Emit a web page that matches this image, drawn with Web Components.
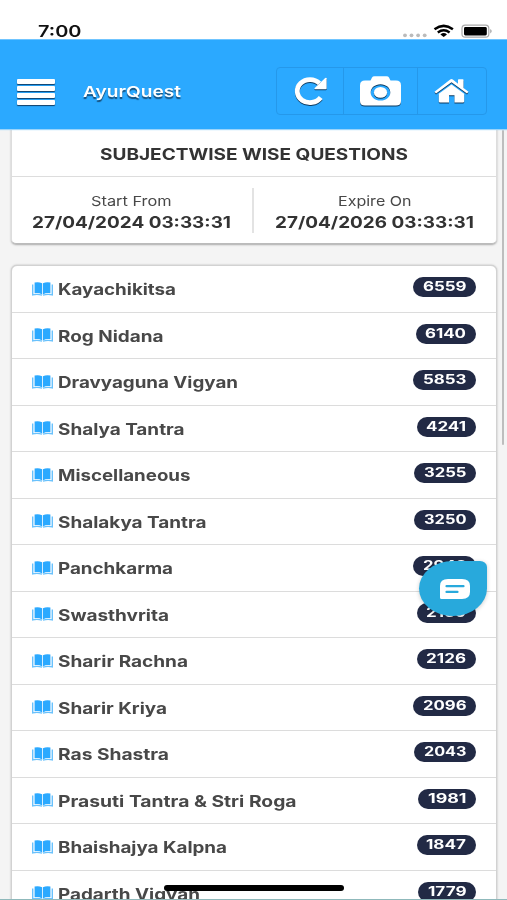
<!DOCTYPE html>
<html lang="en">
<head>
<meta charset="utf-8">
<title>AyurQuest</title>
<style>
html, body { margin: 0; height: 900px; overflow: hidden; background: #f4f4f4; }
body { font-family: Inter, "Liberation Sans", sans-serif; color: #333; }
</style>
</head>
<body>
<quest-app></quest-app>
<script>
/* Text stretched horizontally to the width given by its "w" attribute. */
class WideText extends HTMLElement {
  connectedCallback() {
    this.attachShadow({ mode: 'open' }).innerHTML = `<style>
      :host { display: block; white-space: nowrap; line-height: 1.25; }
      span { display: inline-block; transform-origin: 0 50%; }
    </style><span></span>`;
    const s = this.shadowRoot.querySelector('span');
    s.textContent = this.getAttribute('text');
    const w = parseFloat(this.getAttribute('w'));
    this.style.width = w + 'px';
    s.style.transform = `scaleX(${w / s.getBoundingClientRect().width})`;
  }
}
customElements.define('wide-text', WideText);

function define(name, html) {
  const t = document.createElement('template');
  t.innerHTML = html;
  customElements.define(name, class extends HTMLElement {
    connectedCallback() {
      this.attachShadow({ mode: 'open' }).appendChild(t.content.cloneNode(true));
    }
  });
}

define('status-bar', `<style>
  :host { display: flex; height: 39px; box-sizing: border-box; padding: 21px 14px 0 37.500px; background: #fff; justify-content: space-between; color: #111; }
  wide-text { font-size: 16px; font-weight: 600; }
  svg { display: block; }
</style>
<wide-text text="7:00" w="43.500"></wide-text>
<svg width="92" height="18" viewBox="400 21 92 18">
  <g fill="#bbb"><circle cx="404" cy="35.3" r="1.900"/><circle cx="410.500" cy="35.3" r="1.900"/><circle cx="417.100" cy="35.3" r="1.900"/><circle cx="423.700" cy="35.300" r="1.900"/></g>
  <g fill="none" stroke="#000" stroke-width="2.500"><path d="M433.500 29.200Q442.700 22.600 451.900 29.200"/><path d="M436.800 32.400Q442.700 28.200 448.600 32.400"/></g>
  <path d="M442.700 36.900L439.400 34.400Q442.700 31.800 446 34.400Z"/>
  <rect x="461" y="25.200" width="26.800" height="12" rx="3.200" fill="#fff" stroke="#aaa" stroke-width="1.200"/>
  <rect x="463" y="27" width="22.800" height="8.500" rx="1.400"/>
  <path d="M489.300 29v4.500Q492 31.200 489.300 29" fill="#999"/>
</svg>`);

define('tool-button', `<style>
  :host { display: flex; align-items: center; justify-content: center; box-sizing: border-box; height: 100%; }
</style><slot></slot>`);

define('app-header', `<style>
  :host { display: flex; box-sizing: border-box; height: 90px; padding: 27px 20px 14px 17px; align-items: center; background: #2ba9ff; border-top: 1px solid #70c5ff; position: relative; z-index: 1; box-shadow: 0 1px 1px #9bd4fa; color: #fff; }
  .menu { display: grid; gap: 2.6px; width: 38px; margin: 2px 28px 0 0; }
  .menu i { height: 4.400px; background: #fff; border-radius: 1px; box-shadow: 0 1px 1px #123f68; }
  wide-text { font-size: 15px; font-weight: 600; text-shadow: 0 1.500px 1px #174b75; flex: none; margin-top: 3px; }
  .tools { display: grid; grid-template-columns: 66px 74px 68px; box-sizing: border-box; height: 48px; width: 211px; margin-left: auto; border: 1px solid #2598ea; border-radius: 4px; }
  tool-button { padding-right: 1px; }
  tool-button + tool-button { border-left: 1px solid #2598ea; }
  svg { display: block; overflow: visible; filter: drop-shadow(0 1px .6px #0c3a60); }
</style>
<div class="menu"><i></i><i></i><i></i><i></i></div>
<wide-text text="AyurQuest" w="98"></wide-text>
<div class="tools">
  <tool-button><svg width="34" height="28" viewBox="0 0 34 28"><path d="M27.700 20.500A12.800 11.500 0 1 1 26.500 6.400" fill="none" stroke="#fff" stroke-width="4.800"/><path d="M33.600 1.200V11.400Q33.600 12.200 32.800 12.200H22Q21 12 21.700 11.100L32.200 1Q33.300 .2 33.600 1.200Z" fill="#fff"/></svg></tool-button>
  <tool-button><svg width="41" height="30" viewBox="0 0 41 30"><path fill="#fff" fill-rule="evenodd" d="M5 4.500H10.500L12 1.500Q12.700 .2 14.500 .2H26.500Q28.300 .2 29 1.500L30.500 4.500H36Q41 4.500 41 9V25Q41 29.500 36 29.500H5Q0 29.500 0 25V9Q0 4.500 5 4.500ZM20.500 8.200C14.900 8.200 10.700 11.800 10.700 16.400S14.900 24.600 20.500 24.600S30.300 21 30.300 16.400S26.100 8.200 20.500 8.200Z"/><ellipse cx="20.500" cy="16.400" rx="6.600" ry="5.400" fill="#fff"/></svg></tool-button>
  <tool-button><svg width="35" height="24" viewBox="0 0 35 24"><path fill="#fff" d="M16.200 .6Q17.500 -.4 18.800 .6L24 4.800V1Q24 .3 24.700 .3H28.800Q29.500 .3 29.500 1V9L34.500 12.700L33 14.500L17.500 3.300L2 14.500L.5 12.700Z"/><path fill="#fff" d="M17.500 5.500L30.200 14.700V22.500Q30.200 23.500 29 23.500H20.500V16.300H15V23.500H6Q4.800 23.500 4.800 22.500V14.700Z"/></svg></tool-button>
</div>`);

define('info-card', `<style>
  :host { display: block; box-sizing: border-box; margin: -6px 10px 0 11px; height: 121px; background: #fff; border: 1px solid #ddd; border-bottom-color: #bbb; border-radius: 5px; box-shadow: 0 1px 2px #aaa; }
  .title { height: 53px; box-sizing: border-box; padding-top: 21px; border-bottom: 1px solid #ddd; display: flex; justify-content: center; }
  .title wide-text { font-size: 15.800px; font-weight: 650; }
  .dates { display: grid; grid-template-columns: 242px 1fr; padding-top: 11px; }
  .dates > div { height: 45px; display: grid; justify-items: center; align-content: start; padding: 4.500px 1px 0 0; box-sizing: border-box; }
  .dates > div:first-child { border-right: 2px solid #e3e3e3; }
  .k { font-size: 13.500px; height: 20px; color: #484848; }
  .v { font-size: 15.500px; font-weight: 650; }
</style>
<div class="title"><wide-text text="SUBJECTWISE WISE QUESTIONS" w="308"></wide-text></div>
<div class="dates">
  <div><wide-text class="k" text="Start From" w="80.500"></wide-text><wide-text class="v" text="27/04/2024 03:33:31" w="199"></wide-text></div>
  <div><wide-text class="k" text="Expire On" w="73.500"></wide-text><wide-text class="v" text="27/04/2026 03:33:31" w="199"></wide-text></div>
</div>`);

class SubjectRow extends HTMLElement {
  connectedCallback() {
    const [name, nw, count, cw] = ['name', 'nw', 'count', 'cw'].map(a => this.getAttribute(a));
    this.attachShadow({ mode: 'open' }).innerHTML = `<style>
      :host { display: flex; box-sizing: border-box; height: 46.500px; padding: 0 20px 0 19.500px; border-bottom: 1px solid #dcdcdc; color: #484848; }
      svg { display: block; margin-top: 15.500px; flex: none; }
      .n { font-size: 15.800px; font-weight: 650; margin: 14px auto 0 5px; }
      .badge { display: flex; justify-content: center; align-items: center; margin-top: 11.300px; height: 20px; width: ${cw}px; border-radius: 10px; background: #222a45; color: #fff; }
      .badge wide-text { font-size: 12.800px; font-weight: 650; }
    </style>
    <svg width="21" height="14" viewBox="0 0 21 14"><g fill="#2ba9ff"><path d="M2.600 .6Q6.500 -.5 10.100 1.300V12.500Q6.500 10.500 2.600 11.300Z"/><path d="M18.400 .6Q14.500 -.5 10.900 1.300V12.500Q14.500 10.500 18.400 11.300Z"/></g><path d="M.7 2.500V12.900Q5.500 11.800 10 13.200M20.300 2.500V12.900Q15.500 11.800 11 13.200" fill="none" stroke="#69c1fc" stroke-width="1.400"/></svg>
    <wide-text class="n" text="${name}" w="${nw}"></wide-text>
    <div class="badge"><wide-text text="${count}" w="${cw - 19.5}"></wide-text></div>`;
  }
}
customElements.define('subject-row', SubjectRow);

const subjects = [
  ['Kayachikitsa', 118, 6559, 63], ['Rog Nidana', 105.5, 6140, 60.5],
  ['Dravyaguna Vigyan', 180, 5853, 63], ['Shalya Tantra', 126.5, 4241, 59.5],
  ['Miscellaneous', 132.5, 3255, 62], ['Shalakya Tantra', 148.5, 3250, 62],
  ['Panchkarma', 115, 2943, 63], ['Swasthvrita', 111, 2169, 59.5],
  ['Sharir Rachna', 130, 2126, 59.5], ['Sharir Kriya', 109, 2096, 63],
  ['Ras Shastra', 111, 2043, 62], ['Prasuti Tantra &amp; Stri Roga', 238.5, 1981, 58],
  ['Bhaishajya Kalpna', 169, 1847, 59.5], ['Padarth Vigyan', 142, 1779, 58]
];
define('subject-list', `<style>
  :host { display: block; box-sizing: border-box; margin: 21px 10px 0 11px; background: #fff; border: 1px solid #d2d2d2; border-radius: 6px 6px 0 0; box-shadow: 0 0 2px #aaa; }
</style>` + subjects.map(([n, nw, c, cw]) => `<subject-row name="${n}" nw="${nw}" count="${c}" cw="${cw}"></subject-row>`).join(''));

define('chat-bubble', `<style>
  :host { position: absolute; left: 419px; top: 561px; width: 68px; height: 55px; box-sizing: border-box; display: flex; align-items: center; justify-content: center; padding-left: 4px; background: #28a9dc; border-radius: 34px 7px 34px 34px / 27.500px 6px 27.500px 27.500px; box-shadow: 0 1px 4px #0003; }
</style>
<svg width="30" height="20" viewBox="0 0 30 20"><path d="M8 0H22Q30 0 30 7V13Q30 20 22 20H1.500Q0 20 0 18.500V7Q0 0 8 0Z" fill="#fff"/><path d="M6.500 7.200H23.500M6.500 12.900H17.500" stroke="#28a9dc" stroke-width="2.200" stroke-linecap="round"/></svg>`);

define('home-indicator', `<style>
  :host { position: absolute; left: 164px; top: 885px; width: 180px; height: 6px; border-radius: 3px; background: #000; }
</style>`);
define('scroll-thumb', `<style>
  :host { position: absolute; left: 502px; top: 130px; width: 2px; height: 315px; border-radius: 2px; background: #bdbdbd; }
</style>`);

define('quest-app', `<style>
  :host { display: block; position: relative; height: 900px; overflow: hidden; background: #f4f4f4; }
  .edge { position: absolute; left: 0; right: 0; bottom: 0; height: 1px; background: #8fb9bb; }
</style>
<status-bar></status-bar><app-header></app-header><info-card></info-card><subject-list></subject-list>
<scroll-thumb></scroll-thumb><chat-bubble></chat-bubble><home-indicator></home-indicator><div class="edge"></div>`);
</script>
</body>
</html>
